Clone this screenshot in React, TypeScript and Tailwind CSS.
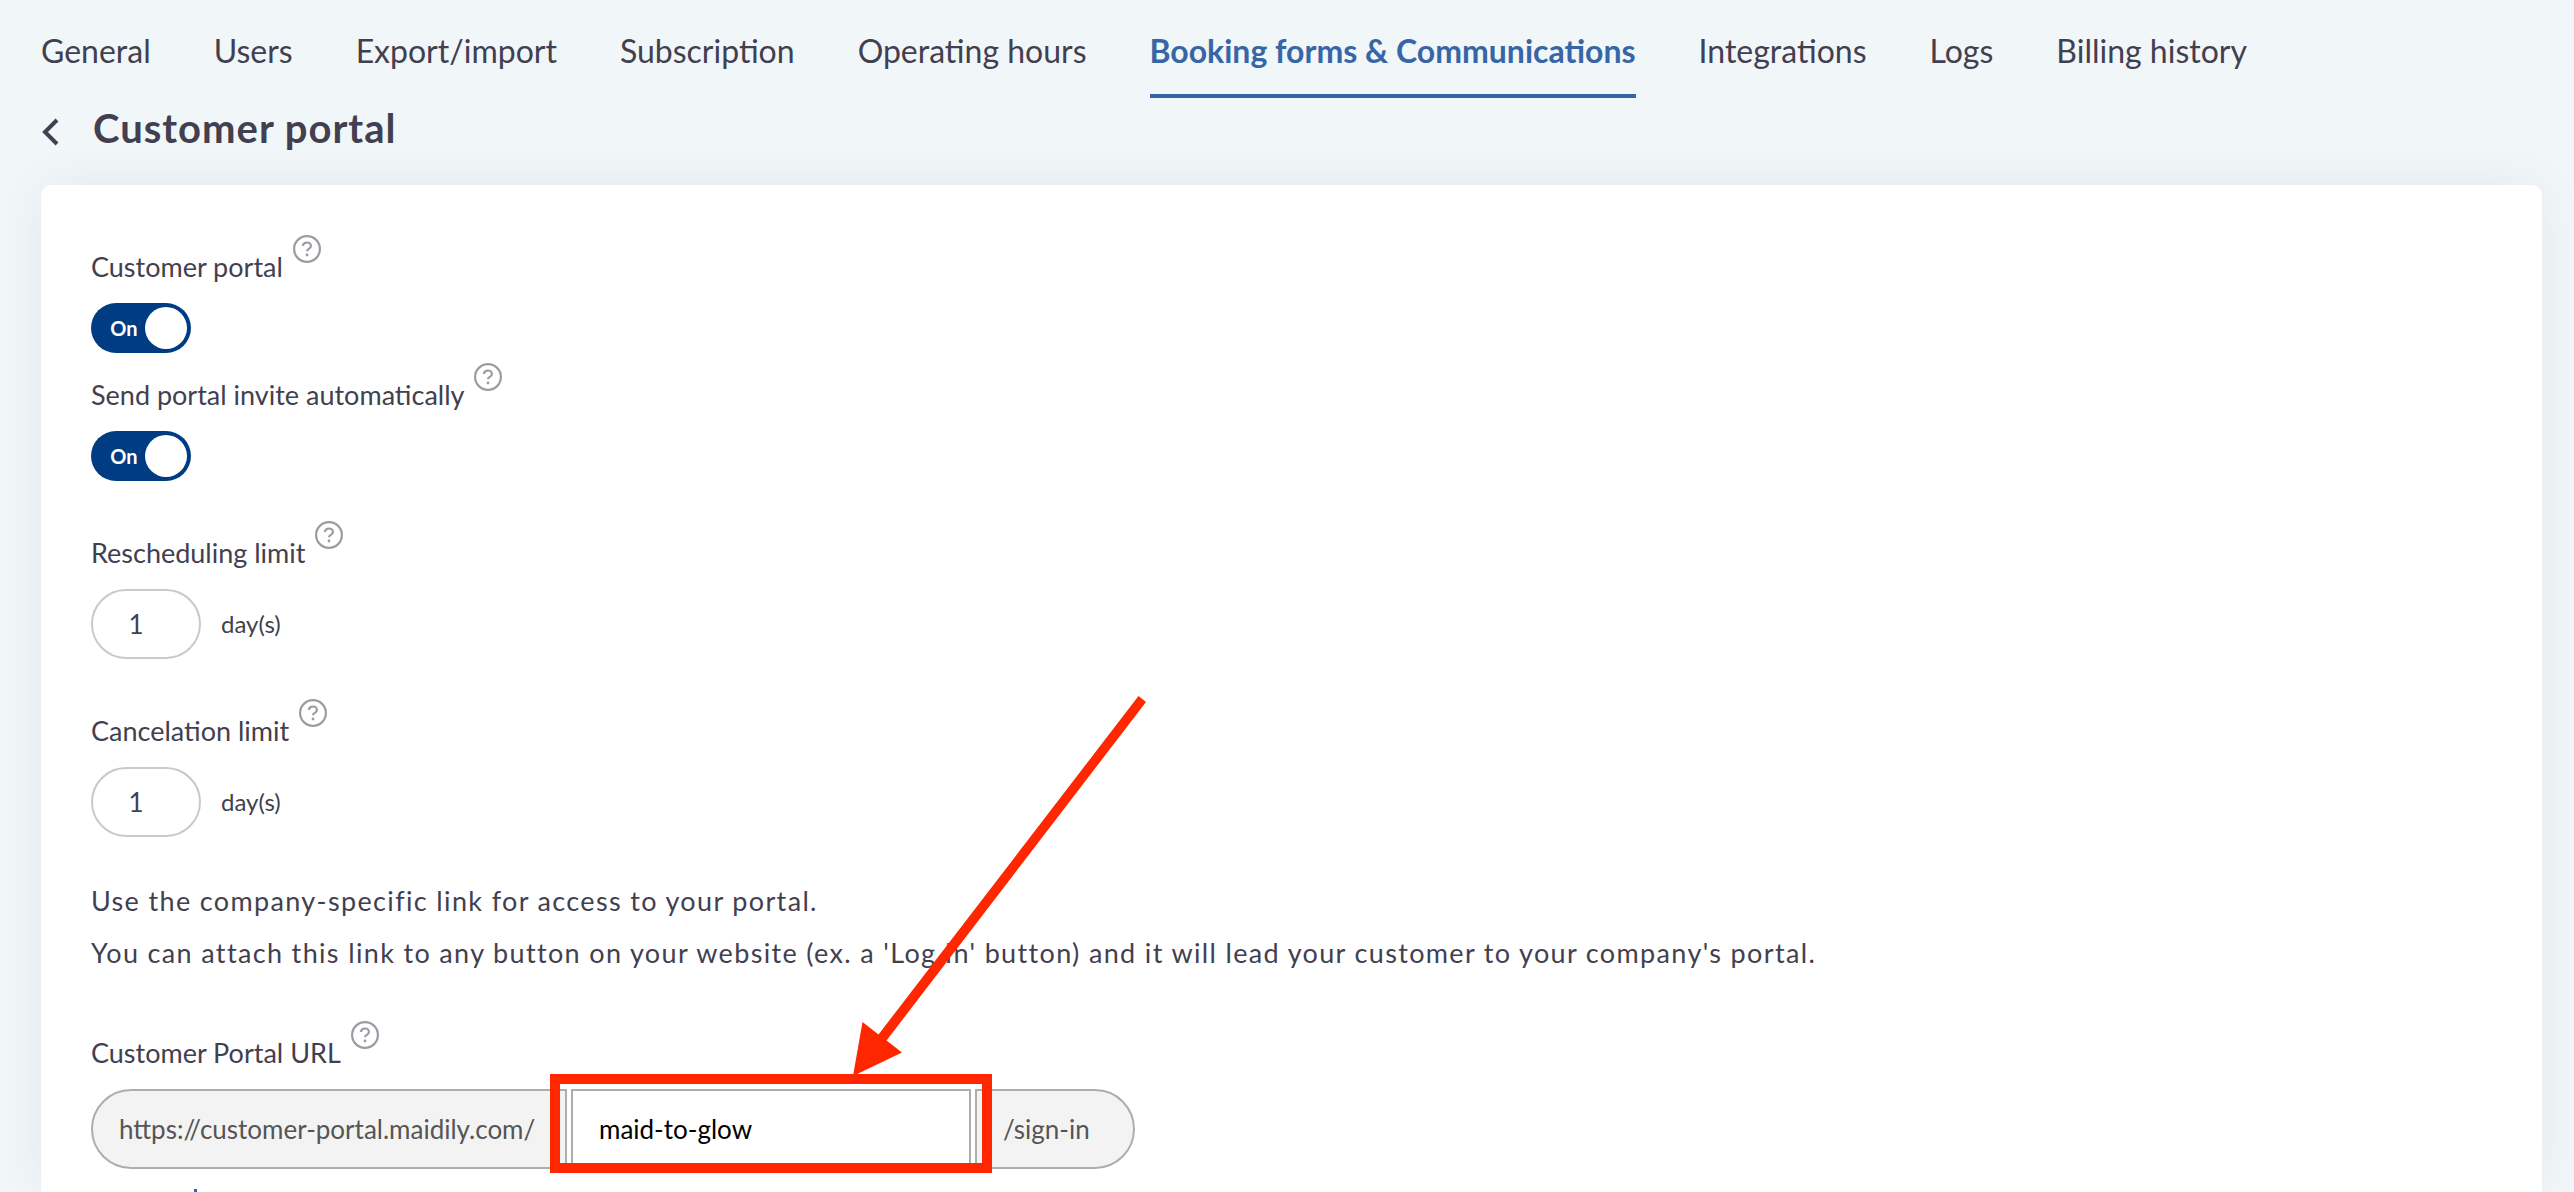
import { useState } from "react"

interface Tab {
  id: string
  name: string
}

const tabs: Tab[] = [
  { id: "general", name: "General" },
  { id: "users", name: "Users" },
  { id: "export", name: "Export/import" },
  { id: "subscription", name: "Subscription" },
  { id: "hours", name: "Operating hours" },
  { id: "booking", name: "Booking forms & Communications" },
  { id: "integrations", name: "Integrations" },
  { id: "logs", name: "Logs" },
  { id: "billing", name: "Billing history" },
]

function HelpIcon() {
  return (
    <svg className="size-7 shrink-0 text-[#9c9ba3]" viewBox="0 0 28 28" fill="none" stroke="currentColor" aria-hidden="true">
      <circle cx="14" cy="14" r="12.9" strokeWidth="2.2" />
      <path d="M9.9 11c.2-2.200 1.800-3.500 4-3.500s4 1.400 4 3.400c0 1.600-.9 2.300-2.100 3-1.200.8-1.800 1.300-1.800 2.400" strokeWidth="2.200" />
      <circle cx="14" cy="20" r="1.400" fill="currentColor" stroke="none" />
    </svg>
  )
}

function FieldLabel({ id, text }: { id: string; text: string }) {
  return (
    <div className="flex items-start gap-[10px]">
      <label htmlFor={id} className="pt-4 text-[27px] leading-8">
        {text}
      </label>
      <HelpIcon />
    </div>
  )
}

function Toggle({ id, label }: { id: string; label: string }) {
  const [on, setOn] = useState(true)

  return (
    <div>
      <FieldLabel id={id} text={label} />
      <label
        htmlFor={id}
        className={`mt-5 flex h-[50px] w-[100px] cursor-pointer items-center rounded-full p-1 ${
          on ? "bg-[#003c82]" : "flex-row-reverse bg-gray-400"
        }`}
      >
        <input id={id} type="checkbox" className="sr-only" checked={on} onChange={() => setOn(!on)} />
        <span className="flex-1 pl-2 text-center text-xl leading-6 font-bold text-white">{on ? "On" : "Off"}</span>
        <span className="size-[42px] rounded-full bg-white" />
      </label>
    </div>
  )
}

function DayLimit({ id, label }: { id: string; label: string }) {
  return (
    <div>
      <FieldLabel id={id} text={label} />
      <div className="mt-5 flex items-center gap-5">
        <input
          id={id}
          type="text"
          inputMode="numeric"
          defaultValue="1"
          className="h-[70px] w-[110px] rounded-full border-2 border-[#c9c9c9] bg-white pr-5 text-center text-[26px] outline-none"
        />
        <span className="text-2xl">day(s)</span>
      </div>
    </div>
  )
}

export default function App() {
  const [activeTab, setActiveTab] = useState("booking")

  return (
    <div className="flex h-screen flex-col overflow-hidden bg-[#f1f6f9] pr-6 pl-[33px] font-['Lato',sans-serif] text-[#423f50]">
      <nav className="flex gap-[63px] px-2 pt-7">
        {tabs.map((tab) => (
          <a
            key={tab.id}
            href={`#${tab.id}`}
            onClick={() => setActiveTab(tab.id)}
            className={`border-b-4 pb-5 text-[32px] leading-[46px] whitespace-nowrap ${
              activeTab === tab.id ? "border-[#3766a6] font-bold text-[#3766a6]" : "border-transparent"
            }`}
          >
            {tab.name}
          </a>
        ))}
      </nav>

      <header className="flex items-center gap-8 px-2 pt-[5px] pb-8">
        <button type="button" aria-label="Back" className="pt-2">
          <svg className="h-7 w-5" viewBox="0 0 20 28" fill="none" stroke="currentColor" strokeWidth="4">
            <path d="M16 2 4 14l12 12" />
          </svg>
        </button>
        <h1 className="text-[40px] leading-[50px] font-bold tracking-wide">Customer portal</h1>
      </header>

      <main className="mx-2 flex-1 rounded-t-[10px] bg-white px-[50px] pt-[50px] shadow-[0_0_50px_rgba(0,40,30,0.06)]">
        <div className="flex flex-col gap-10">
          <div className="flex flex-col gap-[10px]">
            <Toggle id="customer-portal" label="Customer portal" />
            <Toggle id="send-invite" label="Send portal invite automatically" />
          </div>
          <DayLimit id="rescheduling-limit" label="Rescheduling limit" />
          <DayLimit id="cancelation-limit" label="Cancelation limit" />
        </div>

        <p className="mt-[38px] text-[27px] leading-[52px] tracking-wider">
          Use the company-specific link for access to your portal.
          <br />
          You can attach this link to any button on your website (ex. a 'Log In' button) and it will lead your customer
          to your company's portal.
        </p>

        <div className="mt-[42px]">
          <FieldLabel id="portal-url" text="Customer Portal URL" />
          <div className="relative mt-5 flex h-20 w-fit gap-1 text-[26px] text-[#555555]">
            <span className="flex w-[476px] items-center rounded-l-full border-2 border-[#adadad] bg-[#f3f3f3] pl-[26px]">
              https://customer-portal.maidily.com/
            </span>
            <input
              id="portal-url"
              type="text"
              defaultValue="maid-to-glow"
              className="w-[400px] border-2 border-[#adadad] bg-white px-[26px] text-black outline-none"
            />
            <span className="flex w-[160px] items-center rounded-r-full border-2 border-[#adadad] bg-[#f3f3f3] pl-[26px]">
              /sign-in
            </span>

            {/* Highlight around the editable part of the address */}
            <div className="pointer-events-none absolute top-[-15px] left-[459px] h-[99px] w-[442px] border-[10px] border-[#ff2600]" />
            <svg
              className="pointer-events-none absolute bottom-[93px] left-[761px] h-[380px] w-[296px]"
              viewBox="0 0 296 380"
              fill="#ff2600"
              aria-hidden="true"
            >
              <path d="M286.5 0 294 6 34.5 344.5 50 356.5 1 380 10.5 326 26.5 338.5Z" />
            </svg>
          </div>
          <div className="mt-5 ml-[103px] h-[3px] w-[3px] bg-[#3766a6]" />
        </div>
      </main>
    </div>
  )
}
